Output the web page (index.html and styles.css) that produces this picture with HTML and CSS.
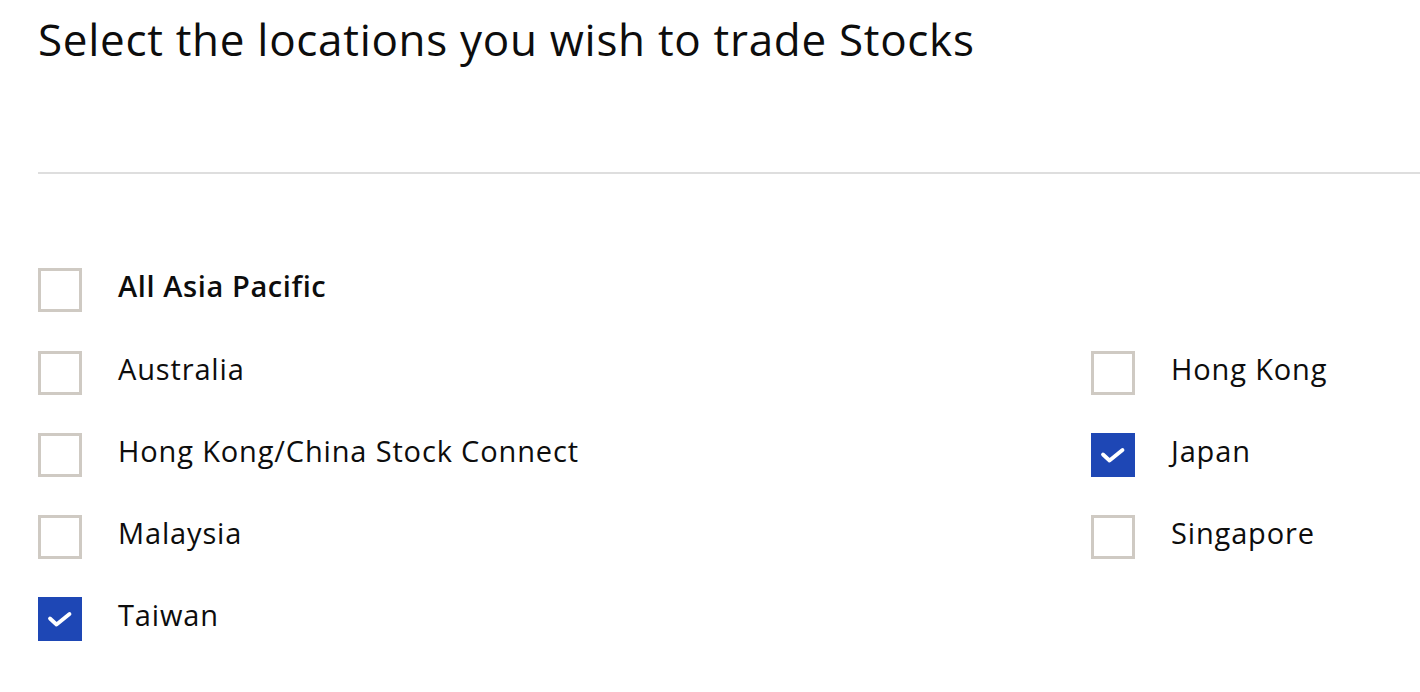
FILE: index.html
```html
<!DOCTYPE html>
<html>
<head>
<meta charset="utf-8">
<link rel="stylesheet" href="styles.css">
</head>
<body>
<main class="page">
  <h1 class="title">Select the locations you wish to trade Stocks</h1>
  <hr class="divider">
  <div class="all-row">
    <label class="option option-bold"><span class="box"></span><span class="label">All Asia Pacific</span></label>
  </div>
  <div class="grid">
    <div class="col">
      <label class="option"><span class="box"></span><span class="label">Australia</span></label>
      <label class="option"><span class="box"></span><span class="label">Hong Kong/China Stock Connect</span></label>
      <label class="option"><span class="box"></span><span class="label">Malaysia</span></label>
      <label class="option"><span class="box checked"><svg viewBox="0 0 44 44" width="44" height="44"><path d="M12 21.5 L18.5 27.5 L31.5 17" fill="none" stroke="#fff" stroke-width="3.8" stroke-linecap="round" stroke-linejoin="round"/></svg></span><span class="label">Taiwan</span></label>
    </div>
    <div class="col">
      <label class="option"><span class="box"></span><span class="label">Hong Kong</span></label>
      <label class="option"><span class="box checked"><svg viewBox="0 0 44 44" width="44" height="44"><path d="M12 21.5 L18.5 27.5 L31.5 17" fill="none" stroke="#fff" stroke-width="3.8" stroke-linecap="round" stroke-linejoin="round"/></svg></span><span class="label">Japan</span></label>
      <label class="option"><span class="box"></span><span class="label">Singapore</span></label>
    </div>
  </div>
</main>
</body>
</html>
```
FILE: styles.css
```css
html, body {
  margin: 0;
  padding: 0;
  background: #fff;
}
body {
  font-family: "Open Sans", "Liberation Sans", sans-serif;
  color: #0d0d0d;
  overflow: hidden;
}
.page {
  padding-left: 38px;
}
.title {
  margin: 0;
  padding-top: 12px;
  font-size: 44px;
  font-weight: 400;
  letter-spacing: 0.7px;
  line-height: 54px;
  color: #0d0d0d;
  white-space: nowrap;
}
.divider {
  margin: 106px 0 0 0;
  border: 0;
  height: 2px;
  background: #dedede;
}
.all-row {
  margin-top: 94px;
}
.grid {
  display: grid;
  grid-template-columns: 1053px 1fr;
  margin-top: 39px;
}
.col {
  display: flex;
  flex-direction: column;
  gap: 38px;
}
.option {
  display: flex;
  align-items: center;
  gap: 36px;
  height: 44px;
}
.box {
  box-sizing: border-box;
  width: 44px;
  height: 44px;
  border: 3px solid #cfcac3;
  background: #fff;
  flex: none;
  display: block;
}
.box.checked {
  border: none;
  background: #1e47b5;
}
.box svg {
  display: block;
}
.label {
  font-size: 29px;
  letter-spacing: 0.85px;
  line-height: 34px;
  padding-bottom: 8px;
  color: #0d0d0d;
  white-space: nowrap;
}
.option-bold .label {
  font-weight: 600;
  letter-spacing: 0.6px;
}
```
